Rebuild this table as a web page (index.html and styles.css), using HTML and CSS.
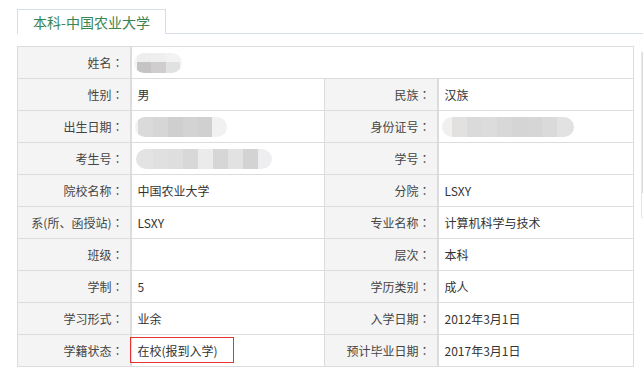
FILE: index.html
```html
<!DOCTYPE html>
<html lang="zh-CN">
  <head>
    <meta charset="UTF-8" />
    <meta name="viewport" content="width=device-width, initial-scale=1.0" />
    <title>学籍信息</title>
    <link rel="stylesheet" href="styles.css">
  </head>
  <body>
    <!-- Tabs -->
    <div class="tabs">
      <div class="tab active">本科-中国农业大学</div>
      <div class="tab-rest"></div>
    </div>

    <div class="main">
      <table class="info">
        <colgroup>
          <col class="c-label" />
          <col class="c-value" />
          <col class="c-label2" />
          <col class="c-value2" />
        </colgroup>
        <tr>
          <th>姓名<span class="colon" lang="zh-TW">：</span></th>
          <td colspan="3"><span class="mask mask-name"></span></td>
        </tr>
        <tr>
          <th>性别<span class="colon" lang="zh-TW">：</span></th>
          <td>男</td>
          <th>民族<span class="colon" lang="zh-TW">：</span></th>
          <td>汉族</td>
        </tr>
        <tr>
          <th>出生日期<span class="colon" lang="zh-TW">：</span></th>
          <td><span class="mask mask-birth"></span></td>
          <th>身份证号<span class="colon" lang="zh-TW">：</span></th>
          <td><span class="mask mask-id"></span></td>
        </tr>
        <tr>
          <th>考生号<span class="colon" lang="zh-TW">：</span></th>
          <td><span class="mask mask-exam"></span></td>
          <th>学号<span class="colon" lang="zh-TW">：</span></th>
          <td></td>
        </tr>
        <tr>
          <th>院校名称<span class="colon" lang="zh-TW">：</span></th>
          <td>中国农业大学</td>
          <th>分院<span class="colon" lang="zh-TW">：</span></th>
          <td>LSXY</td>
        </tr>
        <tr>
          <th>系(所、函授站)<span class="colon" lang="zh-TW">：</span></th>
          <td>LSXY</td>
          <th>专业名称<span class="colon" lang="zh-TW">：</span></th>
          <td>计算机科学与技术</td>
        </tr>
        <tr>
          <th>班级<span class="colon" lang="zh-TW">：</span></th>
          <td></td>
          <th>层次<span class="colon" lang="zh-TW">：</span></th>
          <td>本科</td>
        </tr>
        <tr>
          <th>学制<span class="colon" lang="zh-TW">：</span></th>
          <td>5</td>
          <th>学历类别<span class="colon" lang="zh-TW">：</span></th>
          <td>成人</td>
        </tr>
        <tr>
          <th>学习形式<span class="colon" lang="zh-TW">：</span></th>
          <td>业余</td>
          <th>入学日期<span class="colon" lang="zh-TW">：</span></th>
          <td>2012年3月1日</td>
        </tr>
        <tr>
          <th>学籍状态<span class="colon" lang="zh-TW">：</span></th>
          <td class="status">在校(报到入学)<span class="mark"></span></td>
          <th>预计毕业日期<span class="colon" lang="zh-TW">：</span></th>
          <td>2017年3月1日</td>
        </tr>
      </table>
      <div class="side"></div>
    </div>
  </body>
</html>
```

FILE: styles.css
```css
body {
  margin: 0;
  background: #fff;
  font-family: "Noto Sans CJK SC", "Noto Sans", sans-serif;
  color: #333;
  overflow: hidden;
}

/* tab strip */
.tabs {
  display: flex;
  margin-top: 9px;
  padding-left: 17px;
}
.tab {
  width: 147px;
  height: 24px;
  line-height: 24px;
  border: 1px solid #d6dce8;
  border-bottom: none;
  text-align: center;
  font-size: 14px;
  color: #3a8550;
  background: #fff;
}
.tab-rest {
  flex: 1;
  border-bottom: 1px solid #d6dce8;
}

.main {
  display: flex;
  margin-top: 12px;
  padding-left: 17px;
}

/* info table */
.info {
  border-collapse: collapse;
  table-layout: fixed;
  width: 616px;
  font-size: 12px;
}
.c-label { width: 113px; }
.c-value { width: 194px; }
.c-label2 { width: 113px; }
.c-value2 { width: 196px; }

.info th,
.info td {
  height: 31px;
  padding: 0 6px;
  border: 1px solid #dcdcdc;
  white-space: nowrap;
}
.info th {
  background: #f4f4f4;
  font-weight: normal;
  text-align: right;
  color: #444;
  border-right: 2px solid #dcdcdc;
}
.info td {
  text-align: left;
  color: #333;
}

/* centred full-width colon */
.colon {
  font-family: "Noto Sans CJK TC", "Noto Sans CJK SC", sans-serif;
}

/* masked personal data */
.mask {
  display: inline-block;
  height: 20px;
  vertical-align: middle;
  border-radius: 10px;
  filter: blur(0.4px);
}
.mask-name {
  width: 48px;
  margin-left: -4px;
  background:
    linear-gradient(to bottom, rgba(245, 245, 245, 0.85) 0 9px, transparent 9px),
    linear-gradient(to right, #f4f4f4 0 3px, #c5c3c3 3px 17px, #cfcdcd 17px 32px, #e0e2e2 32px 46px, #f4f4f4 46px);
}
.mask-birth {
  width: 92px;
  margin-left: -3px;
  background: linear-gradient(to right, #f2f2f2 0 3px, #dadada 3px 18px, #d6d6d6 18px 33px, #cfcfcf 33px 48px, #d4d3d4 48px 63px, #d0d0d0 63px 77px, #f1f1f1 77px);
}
.mask-exam {
  width: 136px;
  margin-left: -2px;
  background: linear-gradient(to right, #e3e3e3 0 17px, #e0e0e0 17px 32px, #dedede 32px 47px, #d8d8d8 47px 62px, #ebebeb 62px 77px, #d6d6d6 77px 92px, #e2e2e2 92px 107px, #d3d3d3 107px 122px, #eeeef0 122px);
}
.mask-id {
  width: 132px;
  margin-left: -3px;
  background: linear-gradient(to right, #f0f0f0 0 10px, #e3e1df 10px 25px, #dadada 25px 40px, #dcdcdc 40px 55px, #d8d8d8 55px 70px, #d5d5d5 70px 85px, #d6d6d6 85px 100px, #dadada 100px 115px, #e2e2e2 115px);
}

/* highlighted status */
.status {
  position: relative;
}
.mark {
  position: absolute;
  left: -2px;
  top: 2px;
  width: 102px;
  height: 24px;
  border: 1px solid #e53333;
}

/* partially visible side panel */
.side {
  flex: none;
  box-sizing: border-box;
  width: 6px;
  height: 166px;
  margin-top: 6px;
  margin-left: 7px;
  border: 1px solid #e2e6ee;
  background: linear-gradient(to bottom, #dcdcdc 0 140px, #fff 140px);
}
```
